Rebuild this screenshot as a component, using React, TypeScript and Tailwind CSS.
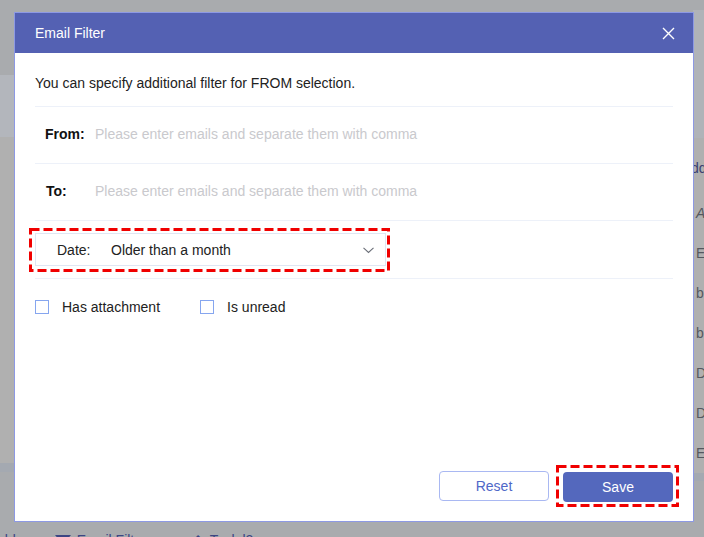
import React from "react";

function DashedBox({ w, h, className }: { w: number; h: number; className: string }) {
  return (
    <svg
      className={className}
      width={w}
      height={h}
      viewBox={`0 0 ${w} ${h}`}
      fill="none"
    >
      <rect
        x={1.5}
        y={1.5}
        width={w - 3}
        height={h - 3}
        stroke="#f00000"
        strokeWidth={3}
        strokeDasharray="9 4"
      />
    </svg>
  );
}

function Checkbox({ label }: { label: string }) {
  return (
    <label className="flex items-center">
      <span className="w-[14px] h-[14px] border border-[#86a6ef] bg-white" />
      <span className="ml-[13px] text-[14px] leading-[20px] text-[#222]">{label}</span>
    </label>
  );
}

export default function App() {
  const font = { fontFamily: '"Liberation Sans", Arial, sans-serif' };
  const rightLetters = ["E", "b", "b", "D", "D", "E"];
  return (
    <div
      className="relative w-[704px] h-[537px] overflow-hidden bg-[#a9abae]"
      style={font}
    >
      {/* page behind the overlay */}
      <div className="flex flex-col h-full">
        <div className="flex h-[521px] shrink-0">
          <div className="w-[14px] flex flex-col">
            <div className="h-[75px]" />
            <div className="h-[62px] bg-[#b3b6bc]" />
            <div className="h-[326px] bg-[#b0b0b0]" />
            <div className="h-[9px] bg-[#a4a9b1]" />
          </div>
          <div className="flex-1" />
          <div className="w-[11px] flex flex-col overflow-hidden">
            <div className="h-[10px]" />
            <div className="h-[128px] bg-[#b0b3b8]" />
            <div className="h-[335px] bg-[#b0b0b0] flex flex-col text-[14px] leading-[20px] whitespace-nowrap">
              <div className="mt-[20px] -ml-[2px] text-[#3b4170]">dd</div>
              <div className="mt-[25px] pl-[3px] text-[#55585f] italic">A</div>
              {rightLetters.map((l, i) => (
                <div key={i} className="mt-[20px] pl-[3px] text-[#55585f]">
                  {l}
                </div>
              ))}
            </div>
            <div className="h-[8px] bg-[#a4a9b1]" />
          </div>
        </div>
        <div className="flex items-start pt-[9px] text-[14px] leading-[20px] text-[#3c4583] whitespace-nowrap">
          <span className="-ml-[3px]">old</span>
          <svg className="ml-[39px] mt-[5px]" width="16" height="14" viewBox="0 0 16 14">
            <path d="M0 0h16l-6 7v7h-4v-7z" fill="#3c4583" />
          </svg>
          <span className="ml-[6px]">Email Filter</span>
          <span className="ml-[46px] text-[12px]">⬆</span>
          <span className="ml-[7px]">Task l2</span>
        </div>
      </div>

      {/* dialog */}
      <div className="absolute left-[14px] top-[12px] w-[680px] h-[510px] border border-[#8d99e4] bg-white flex flex-col">
        <div className="h-[40px] bg-[#5461b3] flex items-center justify-between pl-[20px] pr-[18px] shrink-0">
          <span className="text-white text-[14px] leading-[20px]">Email Filter</span>
          <svg width="13" height="13" viewBox="0 0 13 13">
            <path d="M1 1L12 12M12 1L1 12" stroke="#ffffff" strokeWidth="1.4" />
          </svg>
        </div>
        <div className="flex-1 flex flex-col px-[20px] pb-[19px] pt-[19px]">
          <p className="text-[14px] leading-[20px] text-[#222] pt-[1px] h-[20px]">
            You can specify additional filter for FROM selection.
          </p>
          <div className="mt-[14px] h-px bg-[#edf1f9]" />
          <div className="h-[56px] flex items-center pb-[2px] text-[14px]">
            <span className="w-[60px] pl-[10px] font-bold text-[#111]">From:</span>
            <span className="text-[#c9c9cd]">Please enter emails and separate them with comma</span>
          </div>
          <div className="h-px bg-[#edf1f9]" />
          <div className="h-[56px] flex items-center pb-[2px] text-[14px]">
            <span className="w-[60px] pl-[11px] font-bold text-[#111]">To:</span>
            <span className="text-[#c9c9cd]">Please enter emails and separate them with comma</span>
          </div>
          <div className="h-px bg-[#edf1f9]" />
          <div className="relative mt-[12px] w-[351px] h-[33px] border border-[#dfe6f3] flex items-center pt-[2px] pl-[21px] pr-[11px] text-[14px] text-[#222]">
            <span className="w-[54px]">Date:</span>
            <span className="flex-1">Older than a month</span>
            <svg width="11" height="7" viewBox="0 0 11 7">
              <path d="M0.5 0.8L5.5 5.5L10.5 0.8" stroke="#6b6f78" strokeWidth="1.1" fill="none" />
            </svg>
            <DashedBox w={361} h={44} className="absolute left-[-7px] top-[-6px] pointer-events-none" />
          </div>
          <div className="mt-[12px] h-px bg-[#edf1f9]" />
          <div className="mt-[18px] flex items-center">
            <Checkbox label="Has attachment" />
            <div className="ml-[40px]">
              <Checkbox label="Is unread" />
            </div>
          </div>
          <div className="mt-auto flex justify-end items-start gap-[14px]">
            <button className="w-[110px] h-[30px] rounded-[4px] border border-[#a9b8f2] bg-white text-[#4f68c8] text-[14px]">
              Reset
            </button>
            <div className="relative mt-[1px]">
              <button className="w-[110px] h-[30px] rounded-[4px] bg-[#5468bd] text-white text-[14px] font-medium">
                Save
              </button>
              <DashedBox w={123} h={42} className="absolute left-[-7px] top-[-7px] pointer-events-none" />
            </div>
          </div>
        </div>
      </div>
    </div>
  );
}
